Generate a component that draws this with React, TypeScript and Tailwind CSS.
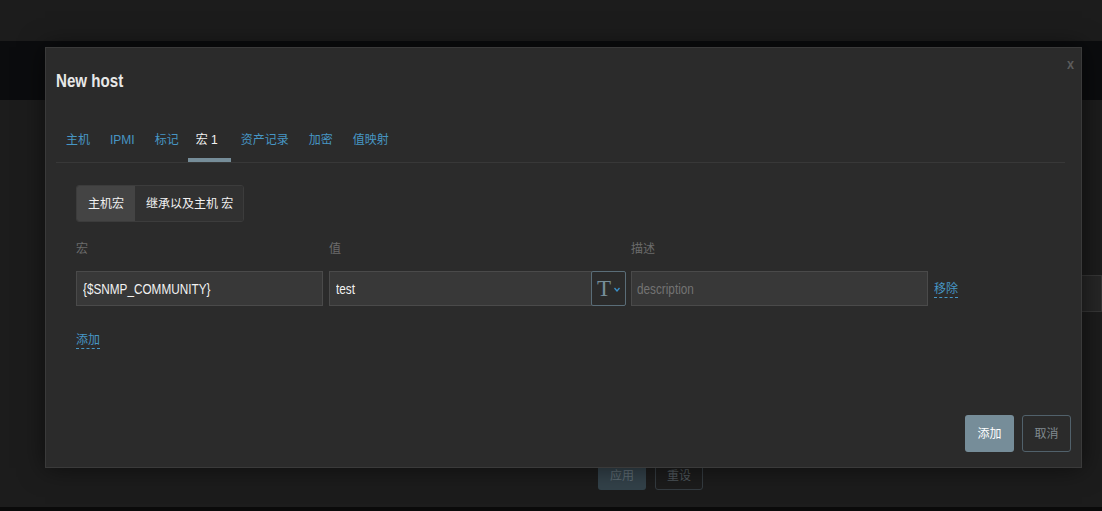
import React from "react";

function Tab({ label, active }: { label: React.ReactNode; active?: boolean }) {
  return (
    <div className={"relative pt-[9px] pb-[13px] text-[12px] " + (active ? "pl-[7px] pr-[13px]" : "px-[10px]")}>
      <span className={active ? "text-[#f2f2f2]" : "text-[#4796c4]"}>{label}</span>
      {active && <div className="absolute -left-[1px] right-0 bottom-0 h-[4px] bg-[#768d99]" />}
    </div>
  );
}

function Narrow({ children, className = "" }: { children: React.ReactNode; className?: string }) {
  return <span className={"inline-block origin-left scale-x-[0.84] whitespace-nowrap " + className}>{children}</span>;
}

export default function App() {
  return (
    <div className="relative w-[1102px] h-[511px] overflow-hidden bg-[#1c1c1c] font-['Liberation_Sans','Noto_Sans_CJK_SC',sans-serif] text-[12px] leading-[18px]">
      {/* background page */}
      <div className="flex flex-col h-full">
        <div className="h-[41px] bg-[#1c1c1c] shrink-0" />
        <div className="h-[59px] bg-[#0b0c0e] shrink-0" />
        <div className="flex-1 flex flex-col bg-[#1c1c1c]">
          <div className="pt-[175px] flex justify-end">
            <div className="w-[500px] h-[37px] bg-[#262626] border border-[#363636]" />
          </div>
          <div className="pt-[150px] pl-[598px] flex gap-[9px]">
            <div className="w-[48px] h-[28px] rounded-[3px] bg-[#33424a] flex items-center justify-center text-[12px] text-[#5f6d75]">应用</div>
            <div className="w-[48px] h-[28px] rounded-[3px] border border-[#353c41] flex items-center justify-center text-[12px] text-[#50585d]">重设</div>
          </div>
        </div>
        <div className="h-[4px] bg-[#0a0a0a] shrink-0" />
      </div>

      {/* dialog */}
      <div className="absolute left-[45px] top-[47px] w-[1037px] h-[421px] bg-[#2b2b2b] border border-[#3a3a3a] shadow-[0_0_24px_rgba(0,0,0,0.55)] flex flex-col pl-[10px] pr-[16px]">
        <div className="absolute right-[6px] top-[7px] text-[15px] text-[#5c5c5c] font-bold">
          <Narrow>x</Narrow>
        </div>
        <div className="pt-[21px] h-[45px]">
          <h1 className="text-[18px] leading-[24px] font-bold text-[#e8e8e8]">
            <Narrow className="scale-x-[0.78]">New host</Narrow>
          </h1>
        </div>
        <div className="mt-[29px] flex border-b border-[#383838]">
          <Tab label="主机" />
          <Tab label="IPMI" />
          <Tab label="标记" />
          <Tab active label="宏 1" />
          <Tab label="资产记录" />
          <Tab label="加密" />
          <Tab label="值映射" />
        </div>

        <div className="pl-[20px] pt-[22px] flex flex-col">
          <div className="flex self-start h-[37px] border border-[#3c3c3c] rounded-[3px] overflow-hidden text-[12px] text-[#f2f2f2]">
            <div className="bg-[#444444] px-[11px] flex items-center">主机宏</div>
            <div className="bg-[#313131] pl-[11px] pr-[10px] flex items-center">继承以及主机 宏</div>
          </div>

          <div className="mt-[18px] grid grid-cols-[247px_297px_296px_auto] gap-x-[6px] text-[12px] text-[#6b6b6b] leading-[18px]">
            <div>宏</div>
            <div>值</div>
            <div className="-ml-[1px]">描述</div>
            <div />
          </div>

          <div className="mt-[13px] grid grid-cols-[247px_297px_296px_auto] gap-x-[6px] items-center text-[14px]">
            <div className="h-[35px] bg-[#383838] border border-[#4a4a4a] flex items-center px-[6px] text-[#f2f2f2]">
              <Narrow>{"{$SNMP_COMMUNITY}"}</Narrow>
            </div>
            <div className="flex h-[35px]">
              <div className="flex-1 bg-[#383838] border border-[#4a4a4a] flex items-center px-[6px] text-[#f2f2f2]">
                <Narrow>test</Narrow>
              </div>
              <div className="w-[35px] -ml-[1px] border border-[#5a6d78] rounded-[2px] bg-[#2b2b2b] flex items-center justify-center gap-[3px]">
                <span className="font-['Liberation_Serif',serif] text-[23px] leading-[23px] text-[#768d99]">T</span>
                <svg width="6" height="5" viewBox="0 0 6 5" className="mt-[2px]">
                  <path d="M0.5 1 L3 4 L5.5 1" fill="none" stroke="#3a8fc8" strokeWidth="1.3" />
                </svg>
              </div>
            </div>
            <div className="-ml-[1px] h-[35px] bg-[#383838] border border-[#4a4a4a] flex items-center px-[5px] text-[#737373]">
              <Narrow>description</Narrow>
            </div>
            <div className="text-[12px]">
              <span className="text-[#4796c4] border-b border-dashed border-[#4796c4] pb-[1px]">移除</span>
            </div>
          </div>

          <div className="mt-[25px] text-[12px]">
            <span className="text-[#4796c4] border-b border-dashed border-[#4796c4] pb-[1px]">添加</span>
          </div>
        </div>

        <div className="mt-auto mb-[15px] flex justify-end gap-[8px] -mr-[6px]">
          <div className="w-[49px] h-[37px] rounded-[3px] bg-[#768d99] flex items-center justify-center text-[12px] text-white">添加</div>
          <div className="w-[49px] h-[37px] rounded-[3px] border border-[#51616b] flex items-center justify-center text-[12px] text-[#808a90]">取消</div>
        </div>
      </div>
    </div>
  );
}
